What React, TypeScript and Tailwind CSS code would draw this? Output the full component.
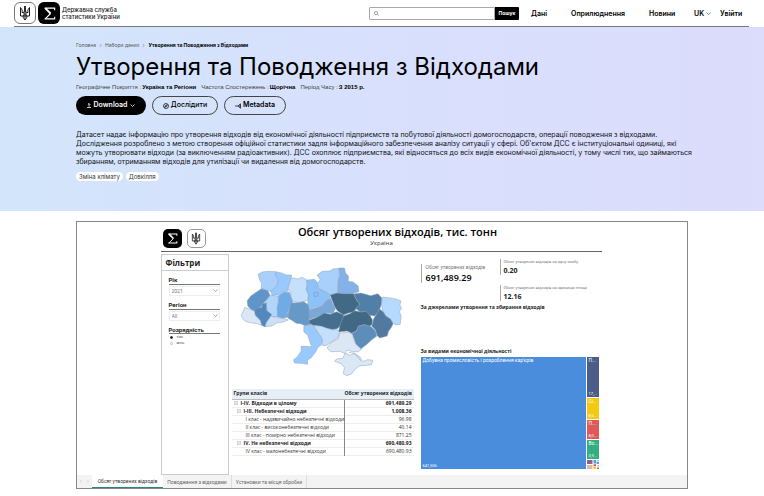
import React from "react";

function Trident({ className }: { className?: string }) {
  return (
    <svg viewBox="0 0 24 32" className={className} fill="none" stroke="#111" strokeWidth="1.9" aria-hidden="true">
      <path d="M12 2v18M12 2c-2 5 1 8-3 14M12 2c2 5-1 8 3 14" />
      <path d="M3 5v17h18V5M3 5c3 3 4 6 3 10 4-1 5 3 3 7M21 5c-3 3-4 6-3 10-4-1-5 3-3 7" />
      <path d="M8 22c0 4 2 5 4 8 2-3 4-4 4-8M12 19v10" />
    </svg>
  );
}

function StateMark({ small = false }: { small?: boolean }) {
  return (
    <span
      className={
        small
          ? "flex h-[19px] w-[19px] items-center justify-center rounded-[5px] border border-[#999] bg-white"
          : "flex h-[22px] w-[22px] items-center justify-center rounded-[6px] border border-[#777] bg-white"
      }
    >
      <Trident className={small ? "h-[13px] w-[10px]" : "h-4 w-3"} />
    </span>
  );
}

function SigmaMark({ small = false }: { small?: boolean }) {
  return (
    <span
      className={
        small
          ? "flex h-[19px] w-[19px] items-center justify-center rounded-[5px] bg-black"
          : "flex h-[22px] w-[22px] items-center justify-center rounded-[6px] bg-black"
      }
    >
      <svg
        viewBox="0 0 24 24"
        className={small ? "h-[11px] w-[11px]" : "h-[13px] w-[13px]"}
        fill="none"
        stroke="#fff"
        aria-hidden="true"
      >
        <path d="M21.500 6V2H3M3 22h18.500v-4" strokeWidth="2.200" />
        <path d="M4 2l10 10" strokeWidth="3.600" />
        <path d="M14 12l-10 10" strokeWidth="2" />
      </svg>
    </span>
  );
}

function Chevron({ className }: { className: string }) {
  return (
    <svg viewBox="0 0 10 6" className={className} fill="none" stroke="currentColor" strokeWidth="1.5" aria-hidden="true">
      <path d="M1 1l4 4 4-4" />
    </svg>
  );
}

function Header() {
  return (
    <header className="mr-[15px] ml-[14px] flex h-[27px] items-center justify-between border-b border-[#777]">
      <a href="#home" className="flex items-center gap-[2px]">
        <StateMark />
        <SigmaMark />
        <span className="text-[6px] leading-[7px] font-medium text-[#222]">
          Державна служба
          <br />
          статистики України
        </span>
      </a>
      <div className="flex items-center">
        <form className="flex h-[13px] w-[150px]" onSubmit={(e) => e.preventDefault()}>
          <label className="flex min-w-0 flex-1 items-center rounded-l-[1px] border border-[#aaa] bg-white pl-1">
            <svg viewBox="0 0 12 12" className="h-[5px] w-[5px]" fill="none" stroke="#666" strokeWidth="1.500" aria-hidden="true">
              <circle cx="5" cy="5" r="4" />
              <path d="M8 8l4 4" />
            </svg>
            <input type="search" aria-label="Пошук" className="h-full w-full min-w-0 text-[6px] outline-none" />
          </label>
          <button className="w-6 rounded-r-[1px] bg-black text-[5px] leading-[13px] font-bold text-white">Пошук</button>
        </form>
        <nav className="flex items-center text-[7px] leading-[9px] font-semibold text-black">
          <a href="#data" className="ml-3 w-10">Дані</a>
          <a href="#releases" className="w-[78px]">Оприлюднення</a>
          <a href="#news" className="w-[45px]">Новини</a>
          <button className="flex w-[26px] items-center gap-[2px]">
            UK <Chevron className="h-[3px] w-[5px] text-[#47a]" />
          </button>
          <a href="#login" className="w-[29px]">Увійти</a>
        </nav>
      </div>
    </header>
  );
}

function Hero() {
  return (
    <section className="h-[184px] bg-linear-to-r from-[#d2e5fb] via-[#d8e0fd] to-[#dcdcfd] px-[76px] pt-[15px]">
      <nav aria-label="Навігація" className="flex items-center gap-[3px] text-[5px] leading-[7px] text-[#555]">
        <a href="#home">Головна</a>
        <svg viewBox="0 0 4 6" className="h-[3px] w-[3px]" fill="none" stroke="#777" aria-hidden="true"><path d="M1 0l2 3-2 3" /></svg>
        <a href="#sets">Набори даних</a>
        <svg viewBox="0 0 4 6" className="h-[3px] w-[3px]" fill="none" stroke="#777" aria-hidden="true"><path d="M1 0l2 3-2 3" /></svg>
        <span className="font-bold text-black">Утворення та Поводження з Відходами</span>
      </nav>
      <h1 className="mt-1 text-[24px] leading-[28px] text-black">Утворення та Поводження з Відходами</h1>
      <dl className="mt-[2px] flex gap-[5px] font-['Liberation_Sans',sans-serif] text-[6px] leading-[8px] text-[#444]">
        <div className="flex gap-px"><dt>Географічне Покриття :</dt><dd className="font-bold text-black">Україна та Регіони</dd></div>
        <div className="flex gap-px"><dt>Частота Спостережень :</dt><dd className="font-bold text-black">Щорічна</dd></div>
        <div className="flex gap-px"><dt>Період Часу :</dt><dd className="font-bold text-black">З 2015 р.</dd></div>
      </dl>
      <div className="mt-[5px] flex gap-[6px] text-[7px] font-semibold">
        <button className="flex h-[19px] w-[70px] items-center justify-center gap-[3px] rounded-full bg-black text-white">
          <svg viewBox="0 0 10 12" className="h-[5px] w-1" fill="none" stroke="currentColor" strokeWidth="2" aria-hidden="true">
            <path d="M5 9V1M2 4l3-3 3 3M0 11h10" />
          </svg>
          Download
          <Chevron className="h-[3px] w-[5px]" />
        </button>
        <button className="flex h-[19px] w-[66px] items-center justify-center gap-[2px] rounded-full border border-[#444] font-medium">
          <svg viewBox="0 0 12 12" className="h-[6px] w-[6px]" fill="none" stroke="currentColor" strokeWidth="1.400" aria-hidden="true">
            <circle cx="6" cy="6" r="5" />
            <path d="M8.500 3.500L7 7l-3.500 1.500L5 5z" />
          </svg>
          Дослідити
        </button>
        <button className="flex h-[19px] w-[62px] items-center justify-center gap-[2px] rounded-full border border-[#444]">
          <svg viewBox="0 0 12 12" className="h-[6px] w-[6px]" fill="none" stroke="currentColor" strokeWidth="1.400" aria-hidden="true">
            <path d="M0 6h11M7 6l3-4M7 6l3 4M11 1v10" />
          </svg>
          Metadata
        </button>
      </div>
      <p className="-mr-4 mt-[15px] text-[7px] leading-[9px] text-[#111]">
        Датасет надає інформацію про утворення відходів від економічної діяльності підприємств та побутової діяльності домогосподарств, операції поводження з відходами.
        <br />
        Дослідження розроблено з метою створення офіційної статистики задля інформаційного забезпечення аналізу ситуації у сфері. Об'єктом ДСС є інституціональні одиниці, які
        <br />
        можуть утворювати відходи (за виключенням радіоактивних). ДСС охоплює підприємства, які відносяться до всіх видів економічної діяльності, у тому числі тих, що займаються
        <br />
        збиранням, отриманням відходів для утилізації чи видалення від домогосподарств.
      </p>
      <div className="mt-[6px] flex gap-[3px] text-[6px] leading-[9px] text-[#333]">
        <span className="rounded-full bg-white px-[3px]">Зміна клімату</span>
        <span className="rounded-full bg-white px-[3px]">Довкілля</span>
      </div>
    </section>
  );
}

const REGIONS: [string, string][] = [
  ["#a9cffa", "M70 164L82 157L100 155L122 156L123 168L131 180L128 194L118 207L106 215L90 209L79 206L80 190L74 180Z"],
  ["#99caff", "M122 156L140 160L154 166L170 166L168 182L160 200L158 215L145 216L132 225L112 227L107 215L118 207L128 194L131 180L123 168Z"],
  ["#c5e0fa", "M170 174L190 178L201 173L214 179L217 195L214 210L221 222L219 242L205 246L190 249L174 244L168 232L168 216L160 212L162 196Z"],
  ["#8dc2f8", "M215 181L230 180L238 178L247 187L252 207L268 214L284 224L286 238L272 246L257 259L238 263L222 270L219 250L221 226L214 210L217 195Z"],
  ["#a9d0fb", "M247 166L262 155L285 154L296 147L312 147L314 165L310 185L308 220L288 226L268 214L252 207L247 192L256 180Z"],
  ["#82b2e8", "M312 145L329 145L332 160L341 170L340 185L355 187L370 199L372 216L350 222L330 222L309 220L310 185L315 165Z"],
  ["#6095c9", "M37 243L48 229L64 218L80 207L99 213L106 227L97 239L84 253L74 265L60 274L50 270L39 260Z"],
  ["#b1d5fb", "M107 227L129 229L131 245L127 263L130 291L115 292L98 279L94 260L94 243Z"],
  ["#71abe6", "M131 228L146 218L164 218L169 234L174 247L166 262L158 278L161 292L143 296L128 291L127 266L131 247Z"],
  ["#5288bd", "M58 268L80 263L82 253L94 249L96 273L110 284L106 298L94 309L91 322L79 316L76 302L61 286Z"],
  ["#dae8f6", "M30 263L43 268L58 274L62 289L76 303L81 317L64 311L45 309L30 304L19 289Z"],
  ["#cbe0f6", "M108 289L125 294L148 297L160 301L145 307L126 310L111 319L91 321L95 308Z"],
  ["#6799c7", "M169 250L190 249L207 246L220 255L223 270L232 284L222 298L226 315L212 318L197 312L184 311L173 303L160 296L160 279Z"],
  ["#7aa8d9", "M223 271L242 264L259 260L274 244L288 237L295 256L302 267L294 282L275 279L255 289L235 295L223 300Z"],
  ["#426985", "M286 226L307 220L330 222L356 222L365 240L375 254L364 267L355 278L341 280L326 286L308 274L298 258Z"],
  ["#517fa7", "M356 223L378 220L408 228L429 222L441 235L440 253L432 276L420 289L404 287L393 276L376 277L362 266L375 254L365 240Z"],
  ["#b6dafd", "M443 232L460 234L480 237L499 244L495 256L500 265L494 276L499 290L496 314L481 316L473 305L466 298L453 289L444 275L440 255Z"],
  ["#446f8e", "M223 302L248 292L269 280L287 284L305 276L326 285L327 299L316 319L307 327L291 330L276 326L253 319L237 318L223 311Z"],
  ["#426983", "M326 289L345 282L360 273L378 277L394 275L405 287L413 301L411 316L401 320L388 315L371 320L365 333L351 341L337 334L311 337L315 318Z"],
  ["#52799f", "M434 268L445 276L453 289L467 298L475 312L468 326L461 335L457 349L435 355L426 347L422 331L411 320L416 298L424 285Z"],
  ["#5c8eb9", "M371 319L390 315L407 320L422 333L425 350L411 360L398 372L378 388L363 374L358 357L349 343L365 334Z"],
  ["#c3dffb", "M237 317L260 320L276 326L293 330L309 330L314 340L309 355L291 365L276 377L264 378L261 361L252 347L246 332Z"],
  ["#dbe7f5", "M314 341L340 337L354 345L356 358L363 374L380 389L371 396L353 396L337 391L330 402L316 395L288 396L276 385L289 369L310 358Z"],
  ["#99caff", "M207 318L224 315L236 319L246 335L256 347L263 360L259 377L250 382L241 399L229 414L217 422L219 434L199 431L179 430L176 420L188 411L199 394L199 380L216 380L231 382L225 367L219 347L207 337Z"],
  ["#dae7f4", "M331 401L347 407L358 400L374 410L384 426L398 420L414 422L410 435L389 438L376 438L361 448L350 463L336 468L325 462L329 444L319 432L299 425L305 418L323 416Z"],
];

function UkraineMap() {
  return (
    <svg viewBox="16 142 488 330" className="h-[110px] w-[163px]" role="img" aria-label="Україна">
      {REGIONS.map(([fill, d]) => (
        <path key={d} d={d} fill={fill} stroke="#8fa3ba" strokeWidth="1.500" strokeLinejoin="round" />
      ))}
      <path d="M236 220l8-3 7 4-3 8-9 2zM342 398l15 3 10 9 12 14" fill="none" stroke="#7c8fa5" strokeWidth="1.500" />
    </svg>
  );
}

function FilterSelect({ id, label, value }: { id: string; label: string; value: string }) {
  return (
    <div className="mb-[5px]">
      <label htmlFor={id} className="block border-b border-[#777] text-[6px] leading-[8px] font-bold text-[#222]">{label}</label>
      <div className="relative mt-[1px]">
        <select id={id} className="block h-[10px] w-full appearance-none border border-[#eee] bg-white pl-[2px] text-[5px] leading-[8px] text-[#777]">
          <option>{value}</option>
        </select>
        <Chevron className="pointer-events-none absolute top-[3px] right-[2px] h-[3px] w-[5px] text-[#888]" />
      </div>
    </div>
  );
}

function Filters() {
  return (
    <aside className="h-[221px] w-[68px] border border-[#ccc]">
      <h3 className="h-4 border-b border-[#ccc] pl-1 font-['Open_Sans','Noto_Sans',sans-serif] text-[8px] leading-[15px] font-bold text-[#222]">Фільтри</h3>
      <div className="pt-[5px] pr-[8px] pl-[7px]">
        <FilterSelect id="year" label="Рік" value="2021" />
        <FilterSelect id="region" label="Регіон" value="All" />
        <fieldset>
          <legend className="w-full border-b border-[#777] text-[6px] leading-[7px] font-bold text-[#222]">Розрядність</legend>
          {["тис.", "млн."].map((unit, i) => (
            <label key={unit} className="flex h-[6px] items-center gap-1 pl-px text-[4px] leading-[6px] text-[#555]">
              <input
                type="radio"
                name="unit"
                defaultChecked={i === 0}
                className="h-[3px] w-[3px] appearance-none rounded-full border border-[#bbb] bg-white checked:border-[#222] checked:bg-[#222]"
              />
              {unit}
            </label>
          ))}
        </fieldset>
      </div>
    </aside>
  );
}

const ROWS = [
  { name: "I-IV. Відходи в цілому", value: "691,489.29", level: 0 },
  { name: "I-III. Небезпечні відходи", value: "1,008.36", level: 1 },
  { name: "I клас - надзвичайно небезпечні відходи", value: "96.98", level: 2 },
  { name: "II клас - високонебезпечні відходи", value: "40.14", level: 2 },
  { name: "III клас - помірно небезпечні відходи", value: "871.25", level: 2 },
  { name: "IV. Не небезпечні відходи", value: "690,480.93", level: 1 },
  { name: "IV клас - малонебезпечні відходи", value: "690,480.93", level: 2 },
];

const INDENT = ["pl-[2px]", "pl-[5px]", "pl-[14px]"];

function WasteTable() {
  return (
    <table className="w-full table-fixed border-collapse font-['Open_Sans','Noto_Sans',sans-serif] text-[5px] leading-[7px] whitespace-nowrap text-[#333]">
      <thead>
        <tr className="h-[10px] bg-[#e6eff8] text-[#222]">
          <th className="w-[113px] border-b border-[#bbb] pl-[2px] text-left font-bold">Групи класів</th>
          <th className="border-b border-[#bbb] pr-[2px] text-right font-bold">Обсяг утворених відходів</th>
        </tr>
      </thead>
      <tbody>
        {ROWS.map((row) => (
          <tr key={row.name} className={row.level < 2 ? "h-[8px] border-b border-[#eee] font-bold text-[#222]" : "h-[8px] border-b border-[#eee]"}>
            <td className={`${INDENT[row.level]} border-r border-r-[#888]`}>
              <div className="flex items-center gap-[3px]">
                {row.level < 2 && (
                  <svg viewBox="0 0 8 8" className="h-1 w-1" fill="none" stroke="#999" aria-hidden="true">
                    <path d="M.5.500h7v7h-7zM2 4h4" />
                  </svg>
                )}
                {row.name}
              </div>
            </td>
            <td className="pr-[2px] text-right">{row.value}</td>
          </tr>
        ))}
      </tbody>
    </table>
  );
}

function SmallKpi({ label, value }: { label: string; value: string }) {
  return (
    <div className="h-4 border-l border-[#aaa] pl-[3px] whitespace-nowrap">
      <div className="text-[4px] leading-[5px] text-[#777]">{label}</div>
      <div className="mt-[2px] font-['Open_Sans','Noto_Sans',sans-serif] text-[7px] leading-[9px] font-bold text-[#222]">{value}</div>
    </div>
  );
}

function Tile({ name, value, className }: { name: string; value: string; className: string }) {
  return (
    <div className={`flex flex-col justify-between pl-[2px] text-[5px] leading-[7px] text-white ${className}`}>
      <span>{name}</span>
      <span className="text-[4px] leading-[6px]">{value}</span>
    </div>
  );
}

function Treemap() {
  return (
    <div className="mr-[3px] flex h-[112px] gap-px">
      <Tile name="Добувна промисловість і розроблення кар'єрів" value="641,506" className="flex-1 bg-[#4a8ddc]" />
      <div className="flex w-[12px] flex-col gap-px">
        <Tile name="П..." value="17,..." className="h-10 bg-[#4c5d8a]" />
        <Tile name="Сі..." value="8,5..." className="h-[21px] bg-[#f3c911]" />
        <Tile name="П..." value="8,0..." className="h-[19px] bg-[#dc5b57]" />
        <Tile name="Во..." value="3,9..." className="h-[19px] bg-[#33ae81]" />
        <svg viewBox="0 0 12 9" className="h-[9px] w-[12px]" aria-hidden="true">
          <path fill="#965f92" d="M0 0h5.500v4H0z" />
          <path fill="#dfb9ac" d="M0 5h5.500v4H0z" />
          <path fill="#5b9bdc" d="M6.500 0h2.500v3.500H6.500zM9.500 2h2.500v2H9.500z" />
          <path fill="#95c8f0" d="M9.500 0h2.500v1.500H9.500zM10.500 5h1.500v1.500h-1.500z" />
          <path fill="#dc5b57" d="M6.500 4.200h2.500v2H6.500zM10 7.500h2V9h-2z" />
          <path fill="#f3c911" d="M6.500 6.800h2.500V9H6.500z" />
        </svg>
      </div>
    </div>
  );
}

const TABS = [
  { name: "Обсяг утворених відходів", className: "w-[71px] border-b border-b-[#2b8578] bg-white text-[#333]" },
  { name: "Поводження з відходами", className: "w-[69px] border-r border-r-[#ddd]" },
  { name: "Установки та місця обробки", className: "w-[75px] border-r border-r-[#ddd]" },
];

function Dashboard() {
  return (
    <section className="mx-[76px] mt-[10px] border border-[#888] font-[Roboto,'Noto_Sans',sans-serif]">
      <div className="flex justify-center pr-[2px]">
        <div className="w-[441px]">
          <div className="flex h-[30px] items-center border-b border-[#666] pl-[2px]">
            <div className="flex gap-[5px] pt-[3px]">
              <SigmaMark small />
              <StateMark small />
            </div>
            <div className="flex-1 pr-3 text-center font-['Open_Sans','Noto_Sans',sans-serif]">
              <h2 className="text-[11px] leading-[14px] font-semibold text-black">Обсяг утворених відходів, тис. тонн</h2>
              <p className="pr-8 text-[6px] leading-[9px] text-[#333]">Україна</p>
            </div>
          </div>
          <div className="flex pt-[2px]">
            <Filters />
            <div className="ml-[3px] w-[182px]">
              <div className="mt-[13px] mb-[12px] flex justify-center pr-[2px]">
                <UkraineMap />
              </div>
              <WasteTable />
            </div>
            <div className="ml-[7px] min-w-0 flex-1">
              <div className="flex h-[49px] pt-[5px]">
                <div className="mt-[5px] h-[19px] w-[79px] border-l border-[#aaa] pl-1 whitespace-nowrap">
                  <div className="text-[5px] leading-[7px] text-[#777]">Обсяг утворених відходів</div>
                  <div className="mt-[2px] font-['Open_Sans','Noto_Sans',sans-serif] text-[9px] leading-[10px] font-semibold text-black">691,489.29</div>
                </div>
                <div className="flex flex-col gap-[10px]">
                  <SmallKpi label="Обсяг утворених відходів на одну особу" value="0.20" />
                  <SmallKpi label="Обсяг утворених відходів на одиницю площі" value="12.16" />
                </div>
              </div>
              <h3 className="h-[44px] font-['Open_Sans','Noto_Sans',sans-serif] text-[5px] leading-[9px] font-bold text-[#222]">За джерелами утворення та збирання відходів</h3>
              <h3 className="h-[10px] font-['Open_Sans','Noto_Sans',sans-serif] text-[5px] leading-[9px] font-bold text-[#222]">За видами економічної діяльності</h3>
              <Treemap />
            </div>
          </div>
        </div>
      </div>
      <div className="flex h-[13px] bg-[#f3f3f3] text-[5px] leading-[12px] text-[#666]">
        <div className="flex w-[15px] items-center justify-around text-[#bbb]">
          <button aria-label="Назад"><svg viewBox="0 0 4 6" className="h-[3px] w-[2px]" fill="none" stroke="currentColor"><path d="M3 0L1 3l2 3" /></svg></button>
          <button aria-label="Далі"><svg viewBox="0 0 4 6" className="h-[3px] w-[2px]" fill="none" stroke="currentColor"><path d="M1 0l2 3-2 3" /></svg></button>
        </div>
        {TABS.map((tab) => (
          <button key={tab.name} className={`text-center whitespace-nowrap ${tab.className}`}>{tab.name}</button>
        ))}
      </div>
    </section>
  );
}

export default function App() {
  return (
    <div className="min-h-screen bg-white font-['Inter','Liberation_Sans',sans-serif]">
      <Header />
      <main>
        <Hero />
        <Dashboard />
      </main>
    </div>
  );
}
